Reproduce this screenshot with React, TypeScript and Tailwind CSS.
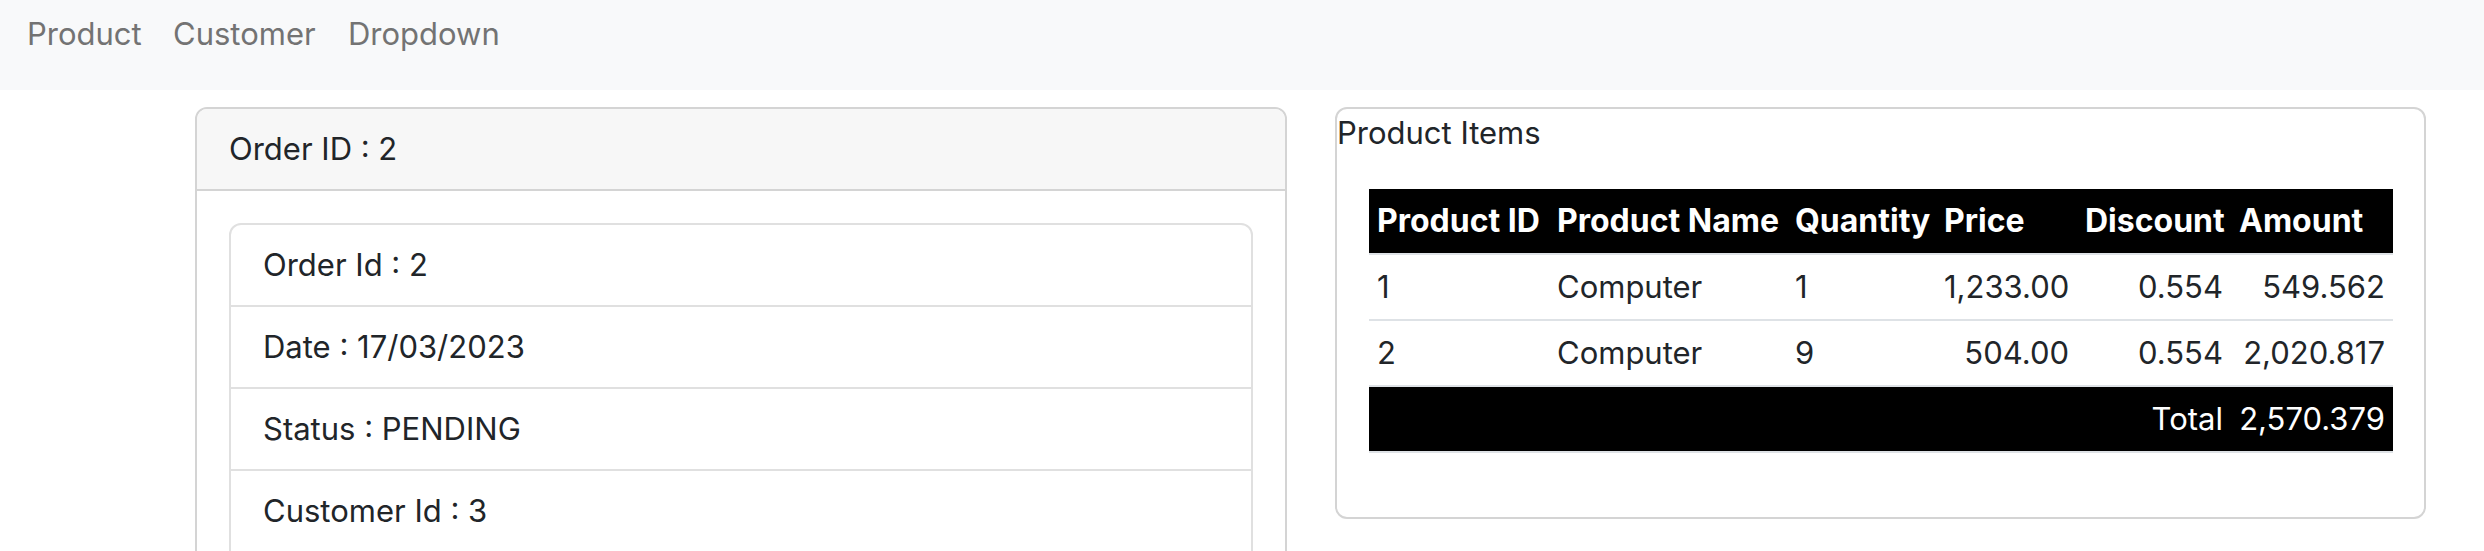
import React from "react";

const font = { fontFamily: "Inter, 'Noto Sans', 'Liberation Sans', sans-serif" };

export default function App() {
  const items = [
    "Order Id : 2",
    "Date : 17/03/2023",
    "Status : PENDING",
    "Customer Id : 3",
    "Customer Name : John",
  ];
  const th = "text-left px-[8px] py-[8px] whitespace-nowrap text-[32px]";
  const td = "px-[8px] py-[8px] whitespace-nowrap";
  return (
    <div style={font} className="text-[#212529] text-[31px] leading-[48px] bg-white min-h-[551px]">
      <nav className="h-[90px] bg-[#f8f9fa] flex items-start pt-[10px] pl-[27px] text-[#737373]">
        <a className="w-[146px]">Product</a>
        <a className="w-[175px]">Customer</a>
        <a>Dropdown</a>
      </nav>
      <div className="flex items-start gap-[48px] pl-[195px] pt-[17px]">
        <div className="w-[1092px] border-2 border-[#d4d4d4] rounded-[12px] overflow-hidden">
          <div className="bg-[#f7f7f7] border-b-2 border-[#d4d4d4] px-[32px] py-[16px]">Order ID : 2</div>
          <div className="p-[32px]">
            <ul className="border-2 border-[#e0e0e0] rounded-[12px]">
              {items.map((t, i) => (
                <li
                  key={t}
                  className={
                    "px-[32px] py-[16px]" + (i > 0 ? " border-t-2 border-[#e0e0e0]" : "")
                  }
                >
                  {t}
                </li>
              ))}
            </ul>
          </div>
        </div>
        <div className="w-[1091px] border-2 border-[#d4d4d4] rounded-[12px]">
          <div>Product Items</div>
          <div className="p-[32px]">
            <table className="w-full table-fixed border-collapse mb-[32px]">
              <colgroup>
                <col className="w-[180px]" />
                <col className="w-[238px]" />
                <col className="w-[149px]" />
                <col className="w-[141px]" />
                <col className="w-[154px]" />
                <col className="w-[162px]" />
              </colgroup>
              <thead>
                <tr className="bg-black text-white font-bold border-b-2 border-[#dee2e6]">
                  <th className={th}>Product ID</th>
                  <th className={th}>Product Name</th>
                  <th className={th}>Quantity</th>
                  <th className={th}>Price</th>
                  <th className={th}>Discount</th>
                  <th className={th}>Amount</th>
                </tr>
              </thead>
              <tbody>
                <tr className="border-b-2 border-[#dee2e6]">
                  <td className={td}>1</td>
                  <td className={td}>Computer</td>
                  <td className={td}>1</td>
                  <td className={td + " text-right"}>1,233.00</td>
                  <td className={td + " text-right"}>0.554</td>
                  <td className={td + " text-right"}>549.562</td>
                </tr>
                <tr className="border-b-2 border-[#dee2e6]">
                  <td className={td}>2</td>
                  <td className={td}>Computer</td>
                  <td className={td}>9</td>
                  <td className={td + " text-right"}>504.00</td>
                  <td className={td + " text-right"}>0.554</td>
                  <td className={td + " text-right"}>2,020.817</td>
                </tr>
              </tbody>
              <tfoot>
                <tr className="bg-black text-white border-b-2 border-[#dee2e6]">
                  <td colSpan={5} className={td + " text-right"}>Total</td>
                  <td className={td + " text-right"}>2,570.379</td>
                </tr>
              </tfoot>
            </table>
          </div>
        </div>
      </div>
    </div>
  );
}
